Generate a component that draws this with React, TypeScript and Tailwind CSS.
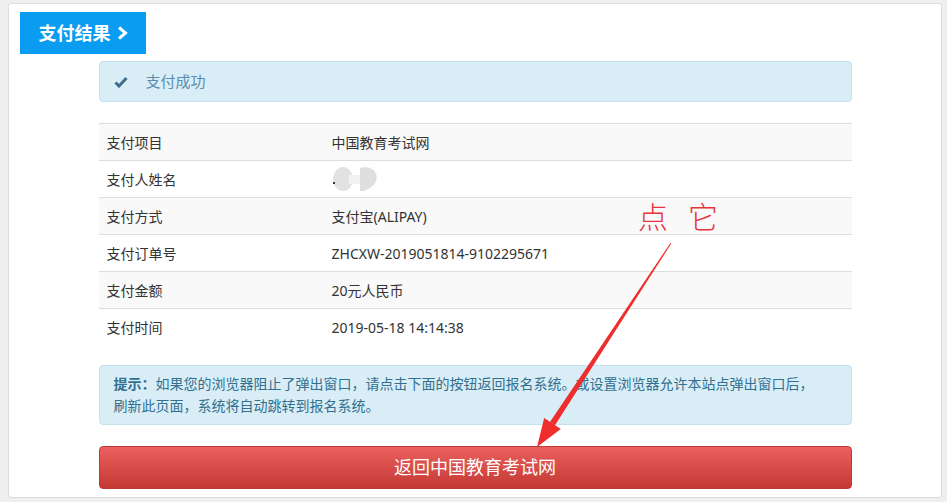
import React from "react";

const rows: [string, string][] = [
  ["支付项目", "中国教育考试网"],
  ["支付人姓名", ""],
  ["支付方式", "支付宝(ALIPAY)"],
  ["支付订单号", "ZHCXW-2019051814-9102295671"],
  ["支付金额", "20元人民币"],
  ["支付时间", "2019-05-18 14:14:38"],
];

function BlurredName() {
  return (
    <svg width="50" height="28" viewBox="0 0 50 28" className="block">
      <ellipse cx="11" cy="14" rx="10" ry="12" fill="#e2e2e2" />
      <rect x="17" y="10" width="12" height="9" fill="#f1f1f1" />
      <path d="M28 3 C40 0 47 8 44 16 C42 21 37 24 32 26 L28 26 Z" fill="#dedede" />
      <rect x="1" y="17" width="2" height="2" fill="#333" />
    </svg>
  );
}

export default function App() {
  return (
    <div className="min-h-[502px] bg-[#efefef] pt-[3px] pl-[8px] font-['Noto_Sans','Noto_Sans_CJK_SC',sans-serif]">
      <div className="relative h-[495px] w-[934px] rounded-[3px] border border-[#dcdcdc] bg-white px-[11px] pt-[8px]">
        <div className="flex h-[42px] w-[126px] items-center justify-center gap-[6px] bg-[#0a9cf0] text-[18px] font-bold text-white">
          <span>支付结果</span>
          <svg width="11" height="14" viewBox="0 0 11 14">
            <path d="M2 1.5 L8.5 7 L2 12.5" fill="none" stroke="#fff" strokeWidth="3" />
          </svg>
        </div>

        <div className="mx-auto w-[753px]">
          <div className="mt-[7px] flex h-[41px] items-center rounded-[4px] border border-[#c4e3ef] bg-[#d9edf7] pl-[14px] text-[15px] text-[#5b8cad]">
            <svg width="14" height="12" viewBox="0 0 14 12" className="mr-[18px]">
              <path d="M1.5 6.5 L5 10 L12.5 2" fill="none" stroke="#3f6f8f" strokeWidth="3" />
            </svg>
            <span>支付成功</span>
          </div>

          <div className="mt-[21px] text-[14px] text-[#333]">
            {rows.map(([label, value], i) => (
              <div
                key={label}
                className={`flex h-[37px] items-center border-t border-[#dddddd] ${i % 2 === 0 ? "bg-[#f9f9f9]" : "bg-white"}`}
              >
                <div className="w-[225px] pl-[8px]">{label}</div>
                <div className="pl-[8px]">{label === "支付人姓名" ? <BlurredName /> : value}</div>
              </div>
            ))}
          </div>

          <div className="mt-[20px] rounded-[4px] border border-[#c4e3ef] bg-[#d9edf7] px-[14px] py-[7px] text-[14px] leading-[22px] text-[#31708f]">
            <p>
              <b>提示：</b>如果您的浏览器阻止了弹出窗口，请点击下面的按钮返回报名系统。或设置浏览器允许本站点弹出窗口后，
            </p>
            <p>刷新此页面，系统将自动跳转到报名系统。</p>
          </div>

          <button className="mt-[21px] flex h-[43px] w-full items-center justify-center rounded-[4px] border border-[#b93a36] bg-gradient-to-b from-[#ea605e] to-[#c53834] text-[18px] text-white">
            返回中国教育考试网
          </button>
        </div>

        <div className="absolute left-[629px] top-[195px] flex gap-[20px] text-[30px] font-light leading-[36px] text-[#e8343b]">
          <span>点</span>
          <span>它</span>
        </div>
        <svg className="absolute left-0 top-0" width="934" height="495" viewBox="8 3 934 495">
          <polygon points="670.4,242.3 669.6,241.7 549,421 554,424.2" fill="#ee2d2d" />
          <polygon points="536,446 543.2,417.1 559.8,428.1" fill="#ee2d2d" />
        </svg>
      </div>
    </div>
  );
}
